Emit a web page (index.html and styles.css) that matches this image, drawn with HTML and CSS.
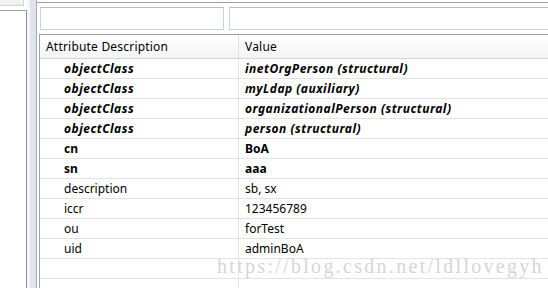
FILE: index.html
```html
<!DOCTYPE html>
<html lang="en">
<head>
  <meta charset="UTF-8" />
  <title>Entry Editor</title>
  <link rel="stylesheet" href="styles.css">
</head>
<body>
  <div class="left-pane">
    <div class="left-cap"></div>
    <div class="left-box"></div>
  </div>
  <div class="splitter"></div>

  <div class="main">
    <div class="filters">
      <input class="filter filter-name" type="text">
      <input class="filter filter-value" type="text">
    </div>

    <div class="attrs">
      <div class="row head">
        <div class="cell name">Attribute Description</div>
        <div class="cell value">Value</div>
      </div>
      <div class="row oc">
        <div class="cell name">objectClass</div>
        <div class="cell value">inetOrgPerson (structural)</div>
      </div>
      <div class="row oc">
        <div class="cell name">objectClass</div>
        <div class="cell value">myLdap (auxiliary)</div>
      </div>
      <div class="row oc">
        <div class="cell name">objectClass</div>
        <div class="cell value">organizationalPerson (structural)</div>
      </div>
      <div class="row oc">
        <div class="cell name">objectClass</div>
        <div class="cell value">person (structural)</div>
      </div>
      <div class="row must">
        <div class="cell name">cn</div>
        <div class="cell value">BoA</div>
      </div>
      <div class="row must">
        <div class="cell name">sn</div>
        <div class="cell value">aaa</div>
      </div>
      <div class="row">
        <div class="cell name">description</div>
        <div class="cell value">sb, sx</div>
      </div>
      <div class="row">
        <div class="cell name">iccr</div>
        <div class="cell value">123456789</div>
      </div>
      <div class="row">
        <div class="cell name">ou</div>
        <div class="cell value">forTest</div>
      </div>
      <div class="row">
        <div class="cell name">uid</div>
        <div class="cell value">adminBoA</div>
      </div>
      <div class="row">
        <div class="cell name"></div>
        <div class="cell value"></div>
      </div>
      <div class="row">
        <div class="cell name"></div>
        <div class="cell value"></div>
      </div>
    </div>
  </div>

  <div class="watermark">https://blog.csdn.net/ldllovegyh</div>
</body>
</html>
```

FILE: styles.css
```css
html {
  overflow: hidden;
}

body {
  margin: 0;
  width: 548px;
  height: 288px;
  overflow: hidden;
  display: flex;
  background: #fff;
  font-family: "Noto Sans", sans-serif;
  font-size: 12px;
  color: #000;
}

/* left tree pane, cut off */
.left-pane {
  width: 27px;
  flex: none;
  display: flex;
  flex-direction: column;
}

.left-cap {
  width: 23px;
  height: 5px;
  background: #f2f2f2;
  border-right: 1px solid #d4d4d4;
  border-bottom: 1px solid #d4d4d4;
}

.left-box {
  flex: 1;
  margin-top: 4px;
  border-top: 1px solid #a5a5a5;
  border-right: 1px solid #8e8f8f;
}

.splitter {
  width: 10px;
  flex: none;
  background: linear-gradient(to right, #f4f5f8 0 3px, #dfe3ef 3px 9px, #a9acb4 9px);
}

.main {
  flex: 1;
  min-width: 0;
  margin-top: 2px;
  border-top: 1px solid #a0a0a0;
  padding: 4px 0 0 2px;
}

.filters {
  display: flex;
  gap: 5px;
  padding-left: 1px;
}

.filter {
  box-sizing: border-box;
  height: 23px;
  margin: 0;
  border: 1px solid #c9d2dc;
  border-top-color: #b5bfca;
  background: #fff;
  outline: none;
}

.filter-name {
  width: 184px;
}

.filter-value {
  flex: 1;
  border-right: none;
}

.attrs {
  margin-top: 4px;
  border-top: 1px solid #a0a0a0;
  border-left: 1px solid #a0a0a0;
}

.row {
  display: flex;
  height: 19px;
  border-bottom: 1px solid #e3e3e3;
  line-height: 19px;
}

.row.head {
  height: 23px;
  line-height: 23px;
  background: linear-gradient(#ffffff, #f3f4f6);
  border-bottom-color: #d5d5d5;
}

.cell {
  white-space: nowrap;
  overflow: hidden;
}

.cell.name {
  box-sizing: border-box;
  width: 199px;
  flex: none;
  padding-left: 24px;
  border-right: 1px solid #e3e3e3;
}

.cell.value {
  flex: 1;
  padding-left: 6px;
}

.row.head .cell.name {
  padding-left: 6px;
  border-right-color: #e0e0e0;
}

.row.head .cell {
  letter-spacing: 0.2px;
}

.row.oc .cell {
  font-weight: bold;
  font-style: italic;
  letter-spacing: 0.5px;
}

.row.must .cell {
  font-weight: bold;
}

/* blog watermark stamped over the screenshot */
.watermark {
  position: absolute;
  left: 217px;
  top: 255px;
  font-family: "Liberation Serif", serif;
  font-size: 20px;
  letter-spacing: 2.3px;
  color: #d6d6d6;
  white-space: nowrap;
  pointer-events: none;
}
```
